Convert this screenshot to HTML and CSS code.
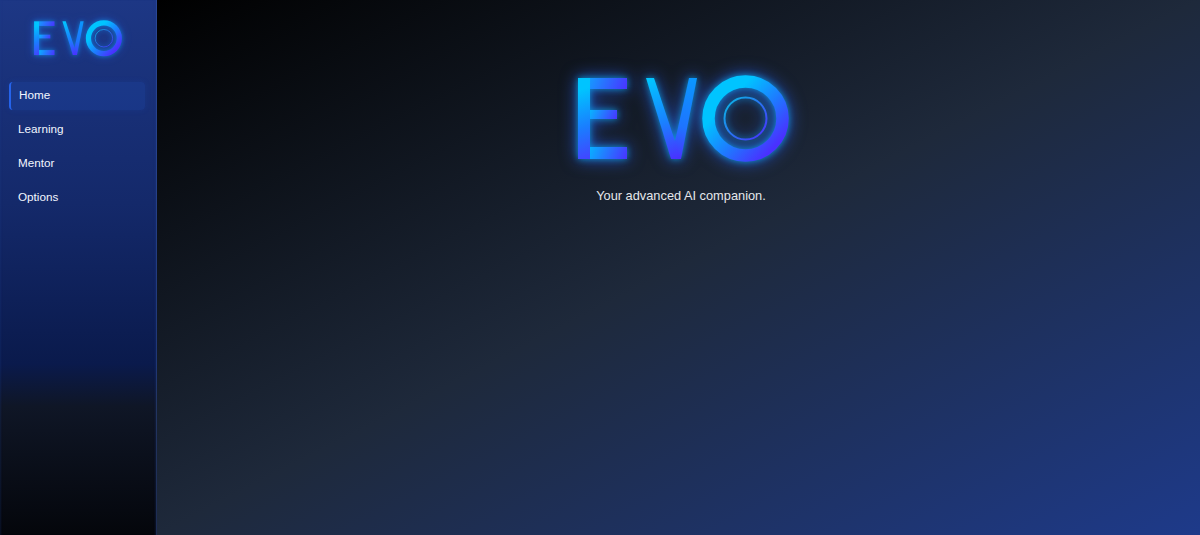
FILE: index.html
```html
<!DOCTYPE html>
<html lang="en">
<head>
<meta charset="utf-8">
<title>EVO</title>
<link rel="stylesheet" href="styles.css">
</head>
<body>
<svg class="defs" width="0" height="0" aria-hidden="true">
  <defs>
    <linearGradient id="stem" gradientUnits="userSpaceOnUse" x1="574" y1="84" x2="602" y2="160">
      <stop offset="0.1" stop-color="#00c4ff"/>
      <stop offset="0.55" stop-color="#1a7dff"/>
      <stop offset="1" stop-color="#4a3aff"/>
    </linearGradient>
    <linearGradient id="bar1" gradientUnits="userSpaceOnUse" x1="588" y1="76" x2="627" y2="92">
      <stop offset="0" stop-color="#12a0ff"/>
      <stop offset="1" stop-color="#4a30ff"/>
    </linearGradient>
    <linearGradient id="bar2" gradientUnits="userSpaceOnUse" x1="590" y1="108" x2="617" y2="121">
      <stop offset="0" stop-color="#06b8ff"/>
      <stop offset="1" stop-color="#4a30ff"/>
    </linearGradient>
    <linearGradient id="bar3" gradientUnits="userSpaceOnUse" x1="590" y1="145" x2="627" y2="161">
      <stop offset="0" stop-color="#06b4ff"/>
      <stop offset="1" stop-color="#4a30ff"/>
    </linearGradient>
    <linearGradient id="vl" gradientUnits="userSpaceOnUse" x1="648" y1="78" x2="678" y2="159">
      <stop offset="0" stop-color="#00c8ff"/>
      <stop offset="0.55" stop-color="#1a80ff"/>
      <stop offset="1" stop-color="#4a30ff"/>
    </linearGradient>
    <linearGradient id="vr" gradientUnits="userSpaceOnUse" x1="695" y1="78" x2="672" y2="159">
      <stop offset="0" stop-color="#0a98ff"/>
      <stop offset="0.6" stop-color="#1e74ff"/>
      <stop offset="1" stop-color="#4a30ff"/>
    </linearGradient>
    <linearGradient id="ringo" gradientUnits="userSpaceOnUse" x1="710" y1="85" x2="780" y2="152">
      <stop offset="0.25" stop-color="#00c4ff"/>
      <stop offset="0.6" stop-color="#1f78ff"/>
      <stop offset="0.92" stop-color="#4a30ff"/>
    </linearGradient>
    <linearGradient id="ringi" gradientUnits="userSpaceOnUse" x1="726" y1="100" x2="765" y2="138">
      <stop offset="0.1" stop-color="#10a8e8"/>
      <stop offset="1" stop-color="#4a30ff"/>
    </linearGradient>
    <symbol id="evo" viewBox="561 58 240 120">
      <rect x="578" y="78" width="12" height="81" fill="url(#stem)"/>
      <rect x="590" y="78" width="37" height="11" fill="url(#bar1)"/>
      <rect x="590" y="110" width="27" height="9" fill="url(#bar2)"/>
      <rect x="590" y="147" width="37" height="12" fill="url(#bar3)"/>
      <polygon points="689,78 697,78 681,159 671,159" fill="url(#vr)"/>
      <polygon points="646,78 654,78 681,159 671,159" fill="url(#vl)"/>
      <circle cx="745.5" cy="118.5" r="37" fill="none" stroke="url(#ringo)" stroke-width="12.5"/>
      <circle cx="745.5" cy="118.5" r="21" fill="none" stroke="url(#ringi)" stroke-width="2"/>
    </symbol>
  </defs>
</svg>
<div class="app">
  <aside class="sidebar">
    <div class="brand">
      <svg class="logo-small"><use href="#evo"/></svg>
    </div>
    <nav class="nav">
      <a class="nav-item active">Home</a>
      <a class="nav-item">Learning</a>
      <a class="nav-item">Mentor</a>
      <a class="nav-item">Options</a>
    </nav>
  </aside>
  <main class="main">
    <svg class="logo-large"><use href="#evo"/></svg>
    <p class="tagline">Your advanced AI companion.</p>
  </main>
</div>
</body>
</html>
```

FILE: styles.css
```css
* { box-sizing: border-box; }
html, body { margin: 0; height: 100%; overflow: hidden; background: #000; }
body { font-family: "Liberation Sans", Arial, sans-serif; }
.defs { position: absolute; }
.app { display: flex; height: 535px; }

.sidebar {
  width: 157px;
  flex: none;
  display: flex;
  flex-direction: column;
  background: linear-gradient(180deg, #1d3785 0%, #14296a 38%, #0a1a4c 68%, #0f1626 76%, #04060b 100%);
  border-right: 1px solid rgba(60, 90, 170, 0.45);
  box-shadow: inset 2px 0 2px -1px rgba(30, 58, 138, 0.25), inset -2px 0 2px -1px rgba(30, 58, 138, 0.25);
}
.brand { display: flex; padding: 13px 0 0 27px; height: 82px; }
.logo-small {
  width: 100px;
  height: 50px;
  filter: blur(0.3px) drop-shadow(0 0 2px rgba(0, 180, 255, 0.5)) drop-shadow(0 0 4px rgba(40, 110, 255, 0.4));
}
.nav { display: flex; flex-direction: column; gap: 6px; padding: 0 11px 0 9px; }
.nav-item {
  height: 28px;
  display: flex;
  align-items: center;
  padding: 0 0 3px 9px;
  font-size: 11.7px;
  color: #f2f6ff;
  border-radius: 4px;
}
.nav-item.active {
  padding-left: 8px;
  border-left: 2px solid #2563eb;
  background: rgba(37, 99, 235, 0.14);
  box-shadow: 0 0 6px rgba(37, 99, 235, 0.12);
}

.main {
  flex: 1;
  display: flex;
  flex-direction: column;
  align-items: center;
  padding: 58px 0 0 5px;
  background: linear-gradient(to bottom right, #000000 0%, #1e293b 50%, #1e3a8a 100%);
}
.logo-large {
  width: 240px;
  height: 120px;
  filter: drop-shadow(0 0 3px rgba(0, 200, 255, 0.6)) drop-shadow(0 0 8px rgba(40, 100, 255, 0.75));
}
.tagline {
  margin: 10px 0 0;
  font-size: 12.8px;
  color: #e5e7eb;
}
```
